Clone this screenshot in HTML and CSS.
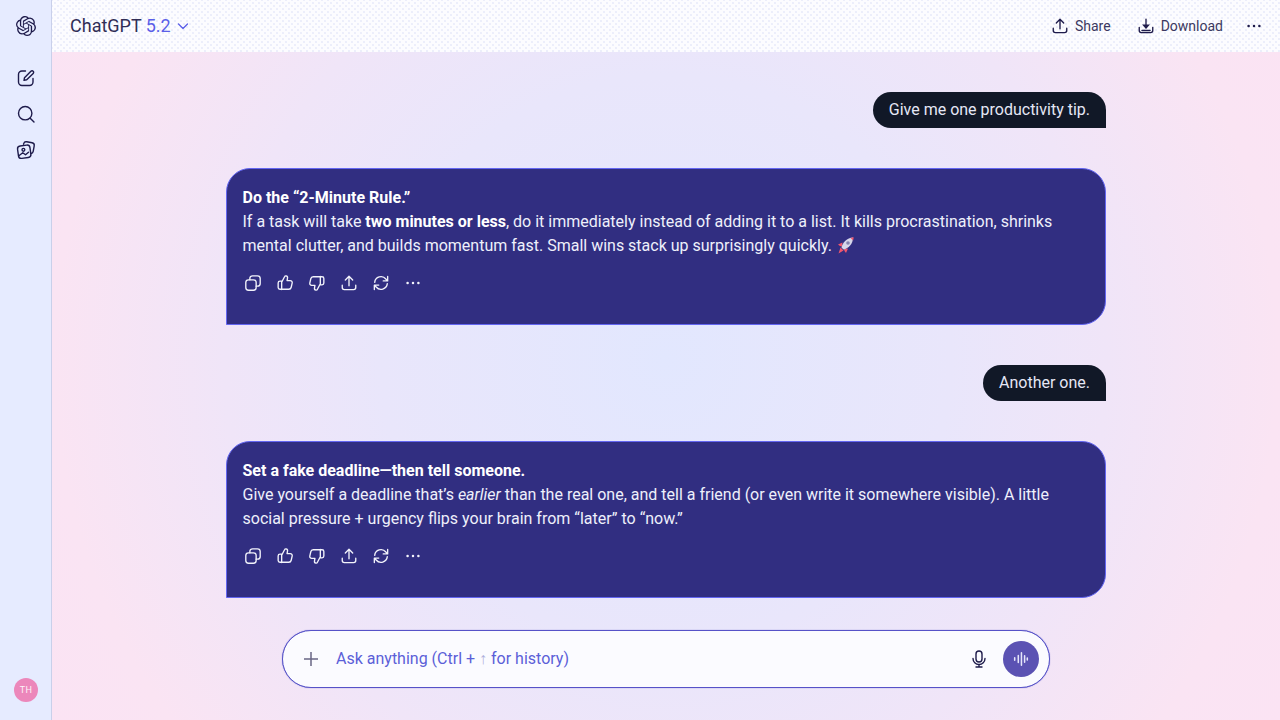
FILE: index.html
```html
<!DOCTYPE html>
<html lang="en">
<head>
<meta charset="utf-8">
<title>ChatGPT 5.2</title>
<link rel="stylesheet" href="styles.css">
</head>
<body>
<svg class="defs" width="0" height="0" aria-hidden="true">
  <defs>
    <symbol id="i-copy" viewBox="0 0 20 20"><rect x="2" y="6.5" width="11.500" height="11.500" rx="3"/><path d="M6.500 6.500V5a3 3 0 0 1 3-3H15a3 3 0 0 1 3 3v5.500a3 3 0 0 1-3 3h-1.500"/></symbol>
    <symbol id="i-up" viewBox="0 0 20 20"><path d="M6.300 9v8.200M6.300 9.200l3.200-6.100c.3-.7 1-1.100 1.700-1 1.100.2 1.800 1.200 1.600 2.300l-.5 2.900h3.600c1.400 0 2.400 1.300 2.100 2.600l-1.100 4.800c-.3 1.300-1.400 2.200-2.700 2.200H4.400c-1.100 0-2-.9-2-2v-5c0-1.100.9-2 2-2h1.900z"/></symbol>
    <symbol id="i-share" viewBox="0 0 20 20"><path d="M10 13V2.700M5.900 6.700L10 2.600l4.100 4.100M2.500 12.500v2.600c0 1.300 1 2.300 2.300 2.300h10.400c1.300 0 2.300-1 2.300-2.300v-2.600"/></symbol>
    <symbol id="i-down" viewBox="0 0 20 20"><path d="M10 2.300v9.500"/><path class="solid" d="M5.600 8.200h8.800L10 13.200z"/><path d="M2.500 11.500v3.600c0 1.300 1 2.300 2.300 2.300h10.400c1.300 0 2.300-1 2.300-2.300v-3.600M5.500 15h9"/></symbol>
    <symbol id="i-redo" viewBox="0 0 20 20"><path d="M3 9.300A7 7 0 0 1 15.400 5.600L17.200 7.600M17.400 2.800v4.900h-4.900M17 10.700A7 7 0 0 1 4.600 14.400L2.800 12.400M2.600 17.200v-4.900h4.900"/></symbol>
    <symbol id="i-more" viewBox="0 0 20 20"><circle class="solid" cx="4" cy="10" r="1.400"/><circle class="solid" cx="10" cy="10" r="1.400"/><circle class="solid" cx="16" cy="10" r="1.400"/></symbol>
  </defs>
</svg>
<div class="app">
  <aside class="rail">
    <svg class="logo" viewBox="0 0 24 24" aria-hidden="true"><path d="M22.2819 9.8211a5.9847 5.9847 0 0 0-.5157-4.9108 6.0462 6.0462 0 0 0-6.5098-2.9A6.0651 6.0651 0 0 0 4.9807 4.1818a5.9847 5.9847 0 0 0-3.9977 2.9 6.0462 6.0462 0 0 0 .7427 7.0966 5.98 5.98 0 0 0 .511 4.9107 6.051 6.051 0 0 0 6.5146 2.9001A5.9847 5.9847 0 0 0 13.2599 24a6.0557 6.0557 0 0 0 5.7718-4.2058 5.9894 5.9894 0 0 0 3.9977-2.9001 6.0557 6.0557 0 0 0-.7475-7.0729zm-9.022 12.6081a4.4755 4.4755 0 0 1-2.8764-1.0408l.1419-.0804 4.7783-2.7582a.7948.7948 0 0 0 .3927-.6813v-6.7369l2.02 1.1686a.071.071 0 0 1 .038.052v5.5826a4.504 4.504 0 0 1-4.4945 4.4944zm-9.6607-4.1254a4.4708 4.4708 0 0 1-.5346-3.0137l.142.0852 4.783 2.7582a.7712.7712 0 0 0 .7806 0l5.8428-3.3685v2.3324a.0804.0804 0 0 1-.0332.0615L9.74 19.9502a4.4992 4.4992 0 0 1-6.1408-1.6464zM2.3408 7.8956a4.485 4.485 0 0 1 2.3655-1.9728V11.6a.7664.7664 0 0 0 .3879.6765l5.8144 3.3543-2.0201 1.1685a.0757.0757 0 0 1-.071 0l-4.8303-2.7865A4.504 4.504 0 0 1 2.3408 7.872zm16.5963 3.8558L13.1038 8.364 15.1192 7.2a.0757.0757 0 0 1 .071 0l4.8303 2.7913a4.4944 4.4944 0 0 1-.6765 8.1042v-5.6772a.79.79 0 0 0-.407-.667zm2.0107-3.0231l-.142-.0852-4.7735-2.7818a.7759.7759 0 0 0-.7854 0L9.409 9.2297V6.8974a.0662.0662 0 0 1 .0284-.0615l4.8303-2.7866a4.4992 4.4992 0 0 1 6.6802 4.66zM8.3065 12.863l-2.02-1.1638a.0804.0804 0 0 1-.038-.0567V6.0742a4.4992 4.4992 0 0 1 7.3757-3.4537l-.142.0805L8.704 5.459a.7948.7948 0 0 0-.3927.6813zm1.0976-2.3654l2.602-1.4998 2.6069 1.4998v2.9994l-2.5974 1.4997-2.6067-1.4997Z"/></svg>
    <nav class="rail-nav">
      <svg class="rail-icon" viewBox="0 0 20 20" aria-hidden="true"><path d="M9.500 3H6a3.500 3.500 0 0 0-3.500 3.500V14A3.500 3.500 0 0 0 6 17.500h7.500A3.500 3.500 0 0 0 17 14v-3.500"/><path d="M8 12.300l.5-2.600 6.400-6.500c.7-.7 1.700-.7 2.300 0 .6.6.6 1.600 0 2.200l-6.500 6.400z"/></svg>
      <svg class="rail-icon" viewBox="0 0 20 20" aria-hidden="true"><circle cx="9.200" cy="9.200" r="6.700"/><path d="M14.200 14.200l3.800 3.800"/></svg>
      <svg class="rail-icon" viewBox="0 0 20 20" aria-hidden="true"><rect x="2" y="5.500" width="12.500" height="12.500" rx="3" transform="rotate(-8 8 12)"/><path d="M7.500 4.200l.2-.6A2.600 2.600 0 0 1 10.700 1.800l5.400 1a2.600 2.600 0 0 1 2.100 3l-1 5.600a2.600 2.600 0 0 1-2 2.100"/><circle cx="7.400" cy="9.800" r="1.400"/><path d="M3.200 15.500l3.600-2.700 2.700 2 3-2.600"/></svg>
    </nav>
    <div class="avatar">TH</div>
  </aside>
  <div class="main">
    <header class="topbar">
      <div class="model">
        <span class="model-name">ChatGPT</span>
        <span class="model-ver">5.2</span>
        <svg class="chev" viewBox="0 0 12 12" aria-hidden="true"><path d="M1.500 4l4.500 4.500L10.500 4"/></svg>
      </div>
      <div class="top-actions">
        <button class="top-btn share"><svg class="ico18"><use href="#i-share"/></svg>Share</button>
        <button class="top-btn"><svg class="ico18"><use href="#i-down"/></svg>Download</button>
        <svg class="ico18 more"><use href="#i-more"/></svg>
      </div>
    </header>
    <section class="chat">
      <div class="user">Give me one productivity tip.</div>
      <article class="bot">
        <p class="txt"><strong>Do the “2-Minute Rule.”</strong><br>If a task will take <strong>two minutes or less</strong>, do it immediately instead of adding it to a list. It kills procrastination, shrinks mental clutter, and builds momentum fast. Small wins stack up surprisingly quickly. <svg class="rocket" viewBox="0 0 18 18" aria-hidden="true"><path class="fin" d="M5.500 6.500L1 8.500l2 1.500 2 .5zM11 12.500l-2 4.500-1.500-2-.5-2zM3.500 11.500l3 3L1.500 17.500z"/><path class="hull" d="M4.500 11.500C5.500 6.500 10 2 16 1.500 16 8 11.500 12.500 6.500 13.500z"/><circle class="port" cx="11" cy="7" r="1.800"/><path class="fin" d="M13.500 1.900l3.300-.7-.7 3.300z"/></svg></p>
        <div class="tools">
          <svg class="ico18"><use href="#i-copy"/></svg>
          <svg class="ico18"><use href="#i-up"/></svg>
          <svg class="ico18 flip"><use href="#i-up"/></svg>
          <svg class="ico18"><use href="#i-share"/></svg>
          <svg class="ico18"><use href="#i-redo"/></svg>
          <svg class="ico18"><use href="#i-more"/></svg>
        </div>
      </article>
      <div class="user">Another one.</div>
      <article class="bot">
        <p class="txt"><strong>Set a fake deadline—then tell someone.</strong><br>Give yourself a deadline that’s <em>earlier</em> than the real one, and tell a friend (or even write it somewhere visible). A little social pressure + urgency flips your brain from “later” to “now.”</p>
        <div class="tools">
          <svg class="ico18"><use href="#i-copy"/></svg>
          <svg class="ico18"><use href="#i-up"/></svg>
          <svg class="ico18 flip"><use href="#i-up"/></svg>
          <svg class="ico18"><use href="#i-share"/></svg>
          <svg class="ico18"><use href="#i-redo"/></svg>
          <svg class="ico18"><use href="#i-more"/></svg>
        </div>
      </article>
    </section>
    <div class="composer-wrap">
      <div class="composer">
        <svg class="plus" viewBox="0 0 16 16" aria-hidden="true"><path d="M8 1v14M1 8h14"/></svg>
        <div class="placeholder">Ask anything (Ctrl + <span class="arrow">↑</span> for history)</div>
        <svg class="mic" viewBox="0 0 20 20" aria-hidden="true"><rect x="7" y="2" width="6" height="11" rx="3"/><path d="M4 9.500a6 6 0 0 0 12 0M10 15.500V18M7 18h6"/></svg>
        <div class="voice"><svg viewBox="0 0 20 20" aria-hidden="true"><path d="M3 8.500v3M7 6v8M10.500 3v14M14 6.500v7M17 9v2"/></svg></div>
      </div>
    </div>
  </div>
</div>
</body>
</html>
```

FILE: styles.css
```css
* { box-sizing: border-box; }
html, body { margin: 0; height: 100%; overflow: hidden; }
body { font-family: Roboto, "Liberation Sans", sans-serif; font-size: 16px; line-height: 24px; color: #1e1b4b; }
.defs { position: absolute; }
.solid { fill: currentColor; stroke: none; }
.app { display: flex; height: 720px; }

.rail { width: 52px; flex: none; display: flex; flex-direction: column; align-items: center; background: #e6ebff; border-right: 1px solid #c9d0ea; padding: 16px 0 18px; color: #1e1b4b; }
.logo { width: 20px; height: 20px; fill: #1e1b4b; display: block; margin-left: 1px; }
.rail-nav { display: flex; flex-direction: column; gap: 16px; margin-top: 32px; margin-left: 1px; }
.rail-icon { width: 20px; height: 20px; display: block; fill: none; stroke: #1e1b4b; stroke-width: 1.4; stroke-linecap: round; stroke-linejoin: round; }
.avatar { margin-top: auto; width: 24px; height: 24px; margin-left: 1px; border-radius: 50%; background: #ec87bb; color: #fdf2f8; font-size: 9px; line-height: 24px; text-align: center; letter-spacing: .3px; }

.main { flex: 1; min-width: 0; display: flex; flex-direction: column; background: radial-gradient(circle at center, #e2e7fe 0%, #e9e6fb 40%, #f0e5f8 62%, #fae4f3 86%, #fbe3f3 100%); }
.topbar { height: 52px; flex: none; display: flex; align-items: center; justify-content: space-between; padding: 0 17px 0 18px; background-color: #fcfcff; background-image: radial-gradient(#eceefb .7px, transparent 1px), radial-gradient(#eceefb .7px, transparent 1px); background-size: 6px 6px; background-position: 0 0, 3px 3px; }
.model { display: flex; align-items: center; font-size: 18px; line-height: 28px; }
.model-name { color: #312e56; }
.model-ver { color: #5b5fe8; margin-left: 4px; }
.chev { width: 12px; height: 12px; margin-left: 6px; fill: none; stroke: #5b5fe8; stroke-width: 1.3; stroke-linecap: round; stroke-linejoin: round; }
.top-actions { display: flex; align-items: center; gap: 22px; }
.top-btn { display: flex; align-items: center; gap: 6px; padding: 0; border: 0; background: none; font: inherit; font-size: 14px; color: #3b3861; }
.share { margin-right: 4px; }
.ico18 { width: 18px; height: 18px; display: block; fill: none; stroke: currentColor; stroke-width: 1.5; stroke-linecap: round; stroke-linejoin: round; overflow: visible; }
.top-btn .ico18 { color: #1e1b4b; }
.more { color: #1e1b4b; }

.chat { flex: 1; min-height: 0; width: 880px; margin: 0 auto; padding-top: 40px; display: flex; flex-direction: column; gap: 40px; }
.user { align-self: flex-end; height: 36px; padding: 6px 16px; background: #111827; color: #e5e7f5; border-radius: 18px 18px 0 18px; }
.bot { height: 157px; padding: 17px 16px 0 15.5px; background: #312e81; border: 1px solid #6366f1; border-radius: 24px 24px 24px 0; color: #eef0fb; }
.txt { margin: 0; }
.txt strong { font-weight: 700; color: #fff; }
.rocket { width: 18px; height: 18px; display: inline-block; vertical-align: -3px; margin-left: 1px; }
.fin { fill: #f0566e; }
.hull { fill: #d6d6ea; }
.port { fill: #8383b0; }
.tools { display: flex; gap: 14px; margin-top: 16px; margin-left: 1.500px; color: #f2f3fb; }
.flip { transform: scale(-1, -1); }

.composer-wrap { flex: none; display: flex; justify-content: center; padding-bottom: 32px; }
.composer { width: 768px; height: 58px; display: flex; align-items: center; padding: 0 10px 0 20px; border: 1px solid #5652c8; box-shadow: 0 0 1px #5652c8; border-radius: 29px; background: #fbfbff; }
.plus { width: 16px; height: 16px; fill: none; stroke: #6a6785; stroke-width: 1.5; flex: none; }
.placeholder { flex: 1; margin-left: 17px; color: #5b5fd8; }
.arrow { color: #aeb0dc; }
.mic { width: 20px; height: 20px; margin-right: 14px; fill: none; stroke: #1e1b4b; stroke-width: 1.4; stroke-linecap: round; }
.voice { width: 36px; height: 36px; border-radius: 50%; background: #5b52b3; display: flex; align-items: center; justify-content: center; }
.voice svg { width: 18px; height: 18px; fill: none; stroke: #e6e6fa; stroke-width: 1.700; stroke-linecap: round; }
```
